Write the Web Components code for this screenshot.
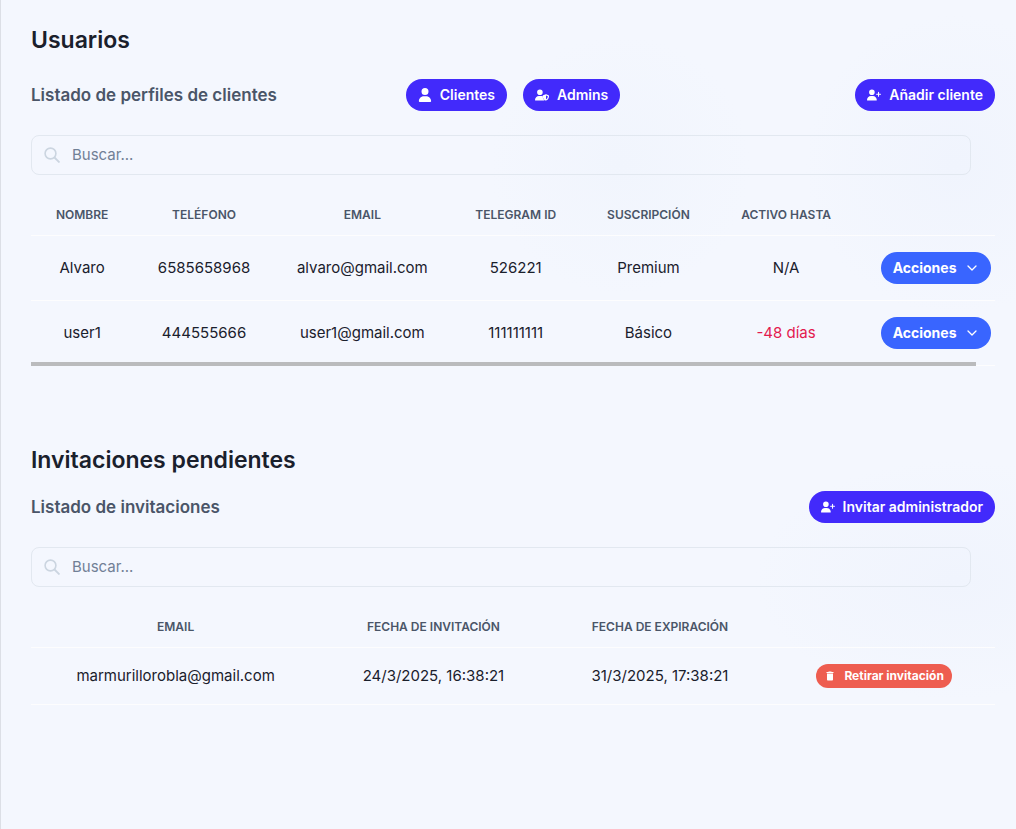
<!DOCTYPE html>
<html lang="es">
<head>
<meta charset="utf-8">
<title>Usuarios</title>
<style>
  html { background: #f4f7fe; }
  body {
    margin: 0;
    min-height: 100vh;
    box-sizing: border-box;
    border-left: 1px solid #dcdfe6;
    font-family: Inter, "Open Sans", sans-serif;
    color: #1a202c;
    background:
      radial-gradient(ellipse 150px 150px at 94% 165px, #f0f4fd, #f0f4fd00),
      radial-gradient(ellipse 200px 120px at 94% 580px, #f0f4fd, #f0f4fd00),
      radial-gradient(circle 130px at 61% 165px, #f1f5fd, #f1f5fd00);
  }
</style>
</head>
<body>
<admin-page></admin-page>

<script>
const ICONS = {
  user: '<svg viewBox="0 0 448 512"><path d="M224 256A128 128 0 1 0 224 0a128 128 0 1 0 0 256zm-46 48C80 304 0 384 0 482c0 17 13 30 30 30h388c17 0 30-13 30-30 0-98-80-178-178-178h-92z"/></svg>',
  shield: '<svg viewBox="0 0 640 512"><path d="M224 256A128 128 0 1 0 224 0a128 128 0 1 0 0 256zm-46 48C80 304 0 384 0 482c0 17 13 30 30 30h388c7 0 14-2 19-6-40-38-85-102-85-199v-1c-23-1-46-2-82-2h-92z"/><path fill-rule="evenodd" d="M496 225c6-2 12-2 18 0l106 42c12 5 20 16 20 29 0 61-25 169-130 215-9 4-19 4-28 0C377 465 352 357 352 296c0-13 8-24 20-29l124-42zm8 56v174c61-30 80-98 82-142l-82-32z"/></svg>',
  plus: '<svg viewBox="0 0 640 512"><path d="M96 128a128 128 0 1 1 256 0 128 128 0 1 1-256 0zM0 482c0-98 80-178 178-178h92c98 0 178 80 178 178 0 17-13 30-30 30H30c-17 0-30-13-30-30zM504 312v-64h-64a24 24 0 0 1 0-48h64v-64a24 24 0 0 1 48 0v64h64a24 24 0 0 1 0 48h-64v64a24 24 0 0 1-48 0z"/></svg>',
  trash: '<svg viewBox="0 0 24 24"><path d="M6 19c0 1.100.9 2 2 2h8c1.100 0 2-.9 2-2V7H6v12zM19 4h-3.500l-1-1h-5l-1 1H5v2h14V4z"/></svg>',
  down: '<svg viewBox="0 0 14 14"><path d="M3 5l4 4 4-4" fill="none" stroke="currentColor" stroke-width="1.300" stroke-linecap="round" stroke-linejoin="round"/></svg>',
  search: '<svg viewBox="0 0 16 16"><circle cx="6.500" cy="6.500" r="5.400" fill="none" stroke="currentColor" stroke-width="1.600"/><path d="M10.500 10.500l5 5" stroke="currentColor" stroke-width="1.800"/></svg>'
};

class PillButton extends HTMLElement {
  connectedCallback() {
    const root = this.attachShadow({ mode: 'open' });
    const icon = ICONS[this.getAttribute('icon')];
    const menu = this.hasAttribute('menu');
    root.innerHTML = `
      <style>
        :host { display: inline-flex; }
        button {
          display: inline-flex; align-items: center; gap: 8px;
          height: 32px; padding: 0 12px; border: 0; border-radius: 16px;
          background: #422afb; color: #fff; cursor: pointer;
          font: 600 14px/20px Inter, "Open Sans", sans-serif; white-space: nowrap;
        }
        svg { display: block; width: 14px; height: 14px; fill: currentColor; flex: none; }
        :host([tone="action"]) button { background: #3965ff; font-weight: 700; }
        :host([tone="danger"]) button {
          background: #ee5d50; height: 24px; padding: 0 8px;
          font-weight: 700; font-size: 12px; line-height: 16px;
        }
        :host([tone="danger"]) svg { width: 12px; height: 12px; }
      </style>
      <button type="button"${menu ? ' aria-haspopup="menu"' : ''}>${menu ? '' : icon}<slot></slot>${menu ? icon : ''}</button>`;
  }
}
customElements.define('pill-button', PillButton);

class SearchField extends HTMLElement {
  connectedCallback() {
    this.attachShadow({ mode: 'open' }).innerHTML = `
      <style>
        :host { display: block; margin-right: 24px; }
        label {
          display: flex; align-items: center; gap: 12px;
          box-sizing: border-box; height: 40px; padding: 0 12px;
          border: 1px solid #e2e8f0; border-radius: 8px; color: #cbd5e0;
        }
        svg { width: 16px; height: 16px; flex: none; }
        input {
          flex: 1; min-width: 0; border: 0; padding: 0; outline: 0; background: none;
          color: #1a202c; font: 400 15px/24px Inter, "Open Sans", sans-serif;
        }
        input::placeholder { color: #718096; opacity: 1; }
      </style>
      <label>${ICONS.search}<input type="text" placeholder="Buscar..." aria-label="Buscar"></label>`;
  }
}
customElements.define('search-field', SearchField);

class DataTable extends HTMLElement {
  connectedCallback() {
    this.attachShadow({ mode: 'open' }).innerHTML = `
      <style>
        :host { display: block; position: relative; overflow: hidden; }
        table { width: 100%; border-collapse: separate; border-spacing: 0; table-layout: fixed; }
        table.wide { width: 102%; }
        th, td { padding: 0; text-align: center; vertical-align: middle; border-bottom: 1px solid #fdfdfe; white-space: nowrap; }
        th { height: 40px; font-weight: 600; font-size: 12px; line-height: 16px; color: #4a5568; text-transform: uppercase; }
        td { height: 56px; font-size: 15px; line-height: 24px; }
        .wide td { height: 64px; }
        .late { color: #e31a4f; }
        pill-button { vertical-align: middle; }
        .thumb { position: absolute; left: 0; bottom: 0; width: 98%; height: 4px; background: #babbbd; }
      </style>
      ${this.content}`;
  }
  build(widths, heads, rows, wide) {
    return `<table${wide ? ' class="wide"' : ''}>
      <colgroup>${widths.map(w => `<col style="width:${w}%">`).join('')}</colgroup>
      <thead><tr>${heads.map(h => h ? `<th scope="col">${h}</th>` : '<th></th>').join('')}</tr></thead>
      <tbody>${rows.map(r => `<tr>${r.map(c => `<td>${c}</td>`).join('')}</tr>`).join('')}</tbody>
    </table>`;
  }
}

class UsersTable extends DataTable {
  get content() {
    const actions = '<pill-button tone="action" icon="down" menu>Acciones</pill-button>';
    return this.build([10.4, 14.4, 17.8, 13.4, 13.6, 14.4, 16],
      ['Nombre', 'Teléfono', 'Email', 'Telegram ID', 'Suscripción', 'Activo hasta', ''],
      [
        ['Alvaro', '6585658968', 'alvaro@gmail.com', '526221', 'Premium', 'N/A', actions],
        ['user1', '444555666', 'user1@gmail.com', '111111111', 'Básico', '<span class="late">-48 días</span>', actions]
      ], true) + '<div class="thumb"></div>';
  }
}
customElements.define('users-table', UsersTable);

class InvitesTable extends DataTable {
  get content() {
    return this.build([30, 23.5, 23.5, 23],
      ['Email', 'Fecha de invitación', 'Fecha de expiración', ''],
      [['marmurillorobla@gmail.com', '24/3/2025, 16:38:21', '31/3/2025, 17:38:21',
        '<pill-button tone="danger" icon="trash">Retirar invitación</pill-button>']]);
  }
}
customElements.define('invites-table', InvitesTable);

class ListSection extends HTMLElement {
  connectedCallback() {
    this.attachShadow({ mode: 'open' }).innerHTML = `
      <style>
        :host { display: block; }
        h2 { margin: 0 0 24px; font-size: 23px; line-height: 30px; font-weight: 600; }
        :host([compact]) h2 { margin-bottom: 16px; }
        .bar { display: grid; grid-template-columns: 1fr auto 1fr; align-items: center; margin-bottom: 24px; }
        h3 { margin: 0; font-size: 17px; line-height: 24px; font-weight: 600; color: #4a5568; white-space: nowrap; }
        .tabs { display: flex; gap: 16px; }
        .end { justify-self: end; display: flex; }
        search-field { margin-bottom: 20px; }
      </style>
      <section>
        <h2>${this.getAttribute('heading')}</h2>
        <div class="bar">
          <h3>${this.getAttribute('subheading')}</h3>
          <div class="tabs"><slot name="tabs"></slot></div>
          <div class="end"><slot name="action"></slot></div>
        </div>
        <search-field></search-field>
        <slot></slot>
      </section>`;
  }
}
customElements.define('list-section', ListSection);

class AdminPage extends HTMLElement {
  connectedCallback() {
    this.attachShadow({ mode: 'open' }).innerHTML = `
      <style>
        :host { display: block; }
        main { display: flex; flex-direction: column; gap: 79px; padding: 25px 21px 40px 30px; }
      </style>
      <main>
        <list-section heading="Usuarios" subheading="Listado de perfiles de clientes">
          <pill-button slot="tabs" icon="user">Clientes</pill-button>
          <pill-button slot="tabs" icon="shield">Admins</pill-button>
          <pill-button slot="action" icon="plus">Añadir cliente</pill-button>
          <users-table></users-table>
        </list-section>
        <list-section compact heading="Invitaciones pendientes" subheading="Listado de invitaciones">
          <pill-button slot="action" icon="plus">Invitar administrador</pill-button>
          <invites-table></invites-table>
        </list-section>
      </main>`;
  }
}
customElements.define('admin-page', AdminPage);
</script>
</body>
</html>
